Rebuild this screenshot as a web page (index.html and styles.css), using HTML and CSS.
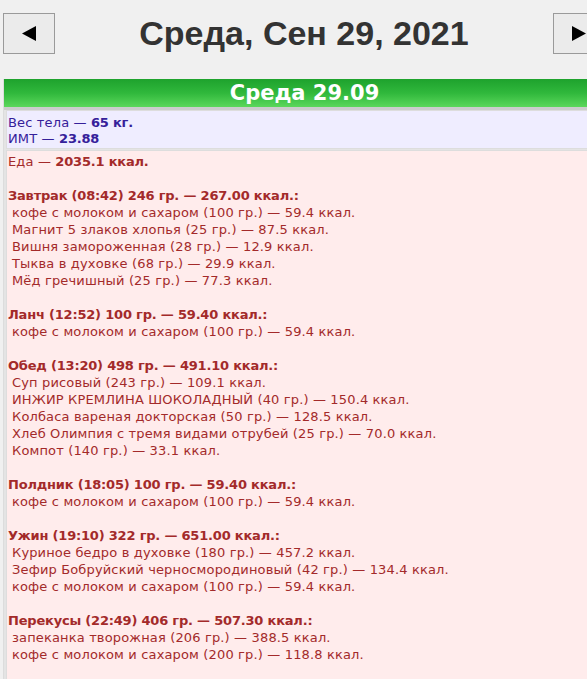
FILE: index.html
```html
<!DOCTYPE html>
<html lang="ru">
<head>
<meta charset="utf-8">
<title>Среда, Сен 29, 2021</title>
<link rel="stylesheet" href="styles.css">
</head>
<body>
<div class="page">
  <header class="top">
    <button class="nav" type="button" aria-label="Назад">
      <svg width="14" height="15" viewBox="0 0 14 15"><polygon points="14,0 14,15 0,7.5" fill="#000"/></svg>
    </button>
    <h1 class="title">Среда, Сен 29, 2021</h1>
    <button class="nav" type="button" aria-label="Вперёд">
      <svg width="14" height="15" viewBox="0 0 14 15"><polygon points="0,0 0,15 14,7.5" fill="#000"/></svg>
    </button>
  </header>
  <section class="day">
    <div class="day-head">Среда 29.09</div>
    <div class="panel body-panel">
      <div>Вес тела — <b>65 кг.</b></div>
      <div>ИМТ — <b>23.88</b></div>
    </div>
    <div class="panel food-panel">
      <div>Еда — <b>2035.1 ккал.</b></div>
      <div class="meal">
        <div class="meal-head">Завтрак (08:42) 246 гр. — 267.00 ккал.:</div>
        <div class="item">кофе с молоком и сахаром (100 гр.) — 59.4 ккал.</div>
        <div class="item">Магнит 5 злаков хлопья (25 гр.) — 87.5 ккал.</div>
        <div class="item">Вишня замороженная (28 гр.) — 12.9 ккал.</div>
        <div class="item">Тыква в духовке (68 гр.) — 29.9 ккал.</div>
        <div class="item">Мёд гречишный (25 гр.) — 77.3 ккал.</div>
      </div>
      <div class="meal">
        <div class="meal-head">Ланч (12:52) 100 гр. — 59.40 ккал.:</div>
        <div class="item">кофе с молоком и сахаром (100 гр.) — 59.4 ккал.</div>
      </div>
      <div class="meal">
        <div class="meal-head">Обед (13:20) 498 гр. — 491.10 ккал.:</div>
        <div class="item">Суп рисовый (243 гр.) — 109.1 ккал.</div>
        <div class="item">ИНЖИР КРЕМЛИНА ШОКОЛАДНЫЙ (40 гр.) — 150.4 ккал.</div>
        <div class="item">Колбаса вареная докторская (50 гр.) — 128.5 ккал.</div>
        <div class="item">Хлеб Олимпия с тремя видами отрубей (25 гр.) — 70.0 ккал.</div>
        <div class="item">Компот (140 гр.) — 33.1 ккал.</div>
      </div>
      <div class="meal">
        <div class="meal-head">Полдник (18:05) 100 гр. — 59.40 ккал.:</div>
        <div class="item">кофе с молоком и сахаром (100 гр.) — 59.4 ккал.</div>
      </div>
      <div class="meal">
        <div class="meal-head">Ужин (19:10) 322 гр. — 651.00 ккал.:</div>
        <div class="item">Куриное бедро в духовке (180 гр.) — 457.2 ккал.</div>
        <div class="item">Зефир Бобруйский черносмородиновый (42 гр.) — 134.4 ккал.</div>
        <div class="item">кофе с молоком и сахаром (100 гр.) — 59.4 ккал.</div>
      </div>
      <div class="meal">
        <div class="meal-head">Перекусы (22:49) 406 гр. — 507.30 ккал.:</div>
        <div class="item">запеканка творожная (206 гр.) — 388.5 ккал.</div>
        <div class="item">кофе с молоком и сахаром (200 гр.) — 118.8 ккал.</div>
      </div>
    </div>
  </section>
</div>
</body>
</html>
```

FILE: styles.css
```css
html, body {
  margin: 0;
  padding: 0;
  overflow: hidden;
  background: #f0f0f0;
}

.page {
  width: 602px;
  margin-left: 3px;
}

.top {
  display: flex;
  align-items: flex-start;
  justify-content: space-between;
  padding-top: 13px;
  height: 66px;
}

.nav {
  width: 52px;
  height: 41px;
  margin: 0;
  padding: 0;
  border: 1px solid #9a9a9a;
  background: #ebebeb;
  display: flex;
  align-items: center;
  justify-content: center;
  flex-shrink: 0;
}

.title {
  margin: 0;
  font-family: "Liberation Sans", Arial, sans-serif;
  font-weight: bold;
  font-size: 34px;
  line-height: 41px;
  color: #333333;
  text-align: center;
  flex: 1;
}

.day {
  border-left: 1px solid #dcdcdc;
  background: #e4e4e4;
  font-family: "DejaVu Sans", sans-serif;
}

.day-head {
  height: 28px;
  line-height: 28px;
  text-align: center;
  color: #ffffff;
  font-weight: bold;
  font-size: 21px;
  background: linear-gradient(to bottom, #1ea22d 0%, #30b83c 50%, #5bd75b 100%);
  border-bottom: 3px solid #cccccc;
}

.panel {
  margin-left: 2px;
  font-size: 13px;
  line-height: 17px;
  letter-spacing: 0.15px;
  padding: 2px 2px 2px 1px;
  border: 1px solid #dddddd;
  border-right: none;
}

.body-panel {
  background: #efedff;
  color: #35209a;
  line-height: 16px;
  padding-top: 4px;
  padding-bottom: 1px;
  margin-bottom: 1px;
}

.food-panel {
  background: #ffecec;
  color: #a32a2a;
  padding-bottom: 40px;
}

.meal {
  margin-top: 17px;
}

.item {
  padding-left: 4px;
}

b, .meal-head {
  font-weight: bold;
  letter-spacing: -0.2px;
}
```
